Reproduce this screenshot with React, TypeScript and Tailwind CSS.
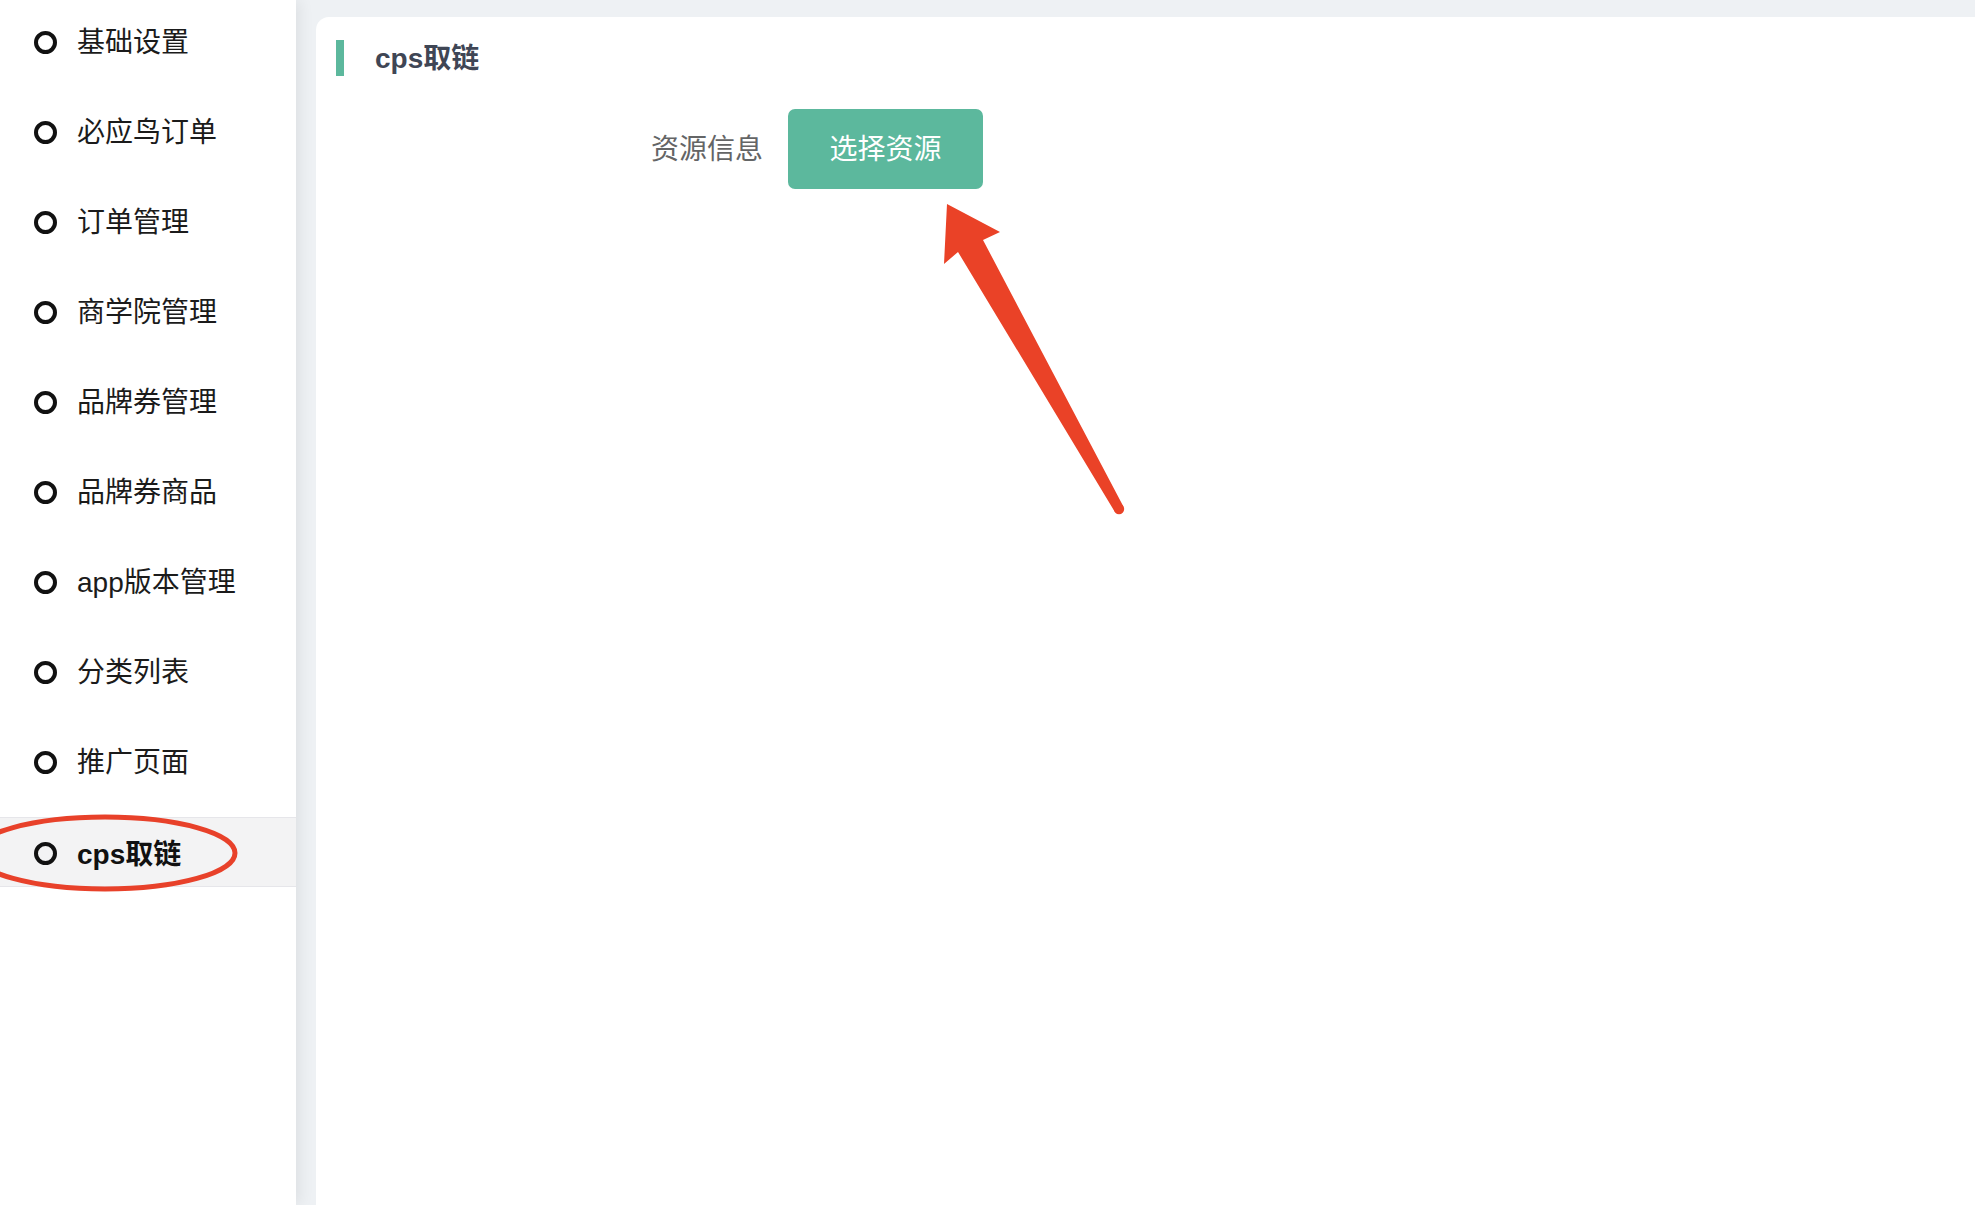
import React from "react";

const items = [
  "基础设置",
  "必应鸟订单",
  "订单管理",
  "商学院管理",
  "品牌券管理",
  "品牌券商品",
  "app版本管理",
  "分类列表",
  "推广页面",
  "cps取链",
];

const font = {
  fontFamily: '"Liberation Sans", "Noto Sans CJK SC", sans-serif',
};

export default function App() {
  return (
    <div
      className="relative flex h-[1205px] w-full overflow-hidden bg-[#eef1f4]"
      style={font}
    >
      <aside className="z-10 flex w-[296px] shrink-0 flex-col gap-[20px] bg-white pt-[7px] shadow-[4px_0_14px_rgba(0,0,0,0.07)]">
        {items.map((label, i) => {
          const active = i === items.length - 1;
          return (
            <div
              key={label}
              className={
                active
                  ? "flex h-[70px] items-center border-y border-[#e6e6ea] bg-[#f3f3f4] pl-[34px]"
                  : "flex h-[70px] items-center pl-[34px]"
              }
            >
              <span
                className={
                  active
                    ? "mt-[3px] box-border h-[23px] w-[23px] shrink-0 rounded-full border-[4px] border-[#111]"
                    : "mt-[1px] box-border h-[23px] w-[23px] shrink-0 rounded-full border-[4px] border-[#111]"
                }
              />
              <span
                className={
                  active
                    ? "ml-[20px] pt-[6px] text-[28px] font-bold leading-none text-[#111]"
                    : "ml-[20px] pt-[2px] text-[28px] leading-none text-[#1b1b1b]"
                }
              >
                {label}
              </span>
            </div>
          );
        })}
      </aside>

      <main className="flex-1 pl-[20px] pt-[17px]">
        <div className="h-full rounded-tl-[13px] bg-white pl-[20px] pt-[23px]">
          <div className="flex h-[36px] items-center">
            <span className="h-[36px] w-[8px] bg-[#5cb89d]" />
            <span className="ml-[31px] pt-[2px] text-[28px] font-bold leading-none text-[#3f4655]">
              cps取链
            </span>
          </div>
          <div className="mt-[33px] flex items-center">
            <div className="w-[452px] pr-[25px] pt-[2px] text-right text-[28px] leading-none text-[#646566]">
              资源信息
            </div>
            <button className="flex h-[80px] w-[195px] items-center justify-center rounded-[7px] bg-[#5cb89d] pt-[2px] text-[28px] leading-none text-white">
              选择资源
            </button>
          </div>
        </div>
      </main>

      <svg
        className="pointer-events-none absolute left-0 top-0 z-20"
        width="1975"
        height="1205"
        viewBox="0 0 1975 1205"
      >
        <ellipse
          cx="105"
          cy="853"
          rx="130"
          ry="36"
          fill="none"
          stroke="#e8412a"
          strokeWidth="5"
        />
        <polygon
          points="947,204 1000,232 983,240 1123.4,506.5 1114.6,511.5 958,252 944,264"
          fill="#ea4227"
        />
        <circle cx="1119" cy="509" r="5.2" fill="#ea4227" />
      </svg>
    </div>
  );
}
